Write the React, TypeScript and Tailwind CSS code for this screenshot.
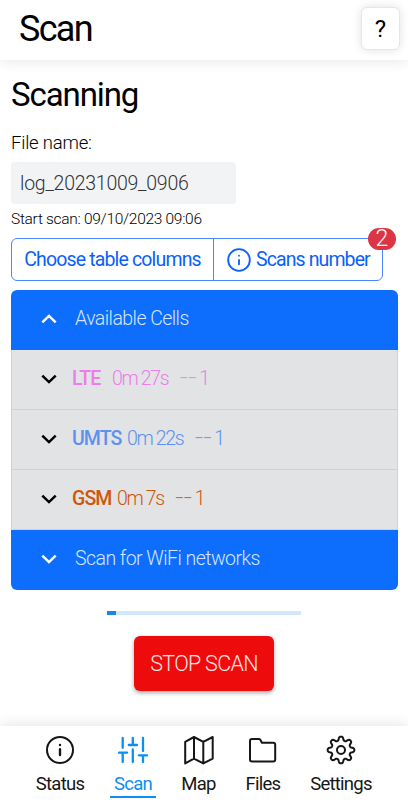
import type { ReactNode } from "react";
import clsx from "clsx";
import { Info } from "lucide-react";

function NavIcon({ children, thick }: { children: ReactNode; thick?: boolean }) {
  return (
    <svg
      viewBox="0 0 30 30"
      className="w-[30px] h-[30px]"
      fill="none"
      stroke="currentColor"
      strokeWidth={thick ? 2.3 : 2}
      strokeLinecap="round"
      strokeLinejoin="round"
    >
      {children}
    </svg>
  );
}

// eight rounded teeth around the centre
const gearPoints = Array.from({ length: 160 }, (_, i) => {
  const a = (i / 160) * Math.PI * 2;
  const wave = Math.cos(8 * a);
  const r = 11.5 + 2 * Math.tanh(1.6 * wave);
  return `${(15 + r * Math.cos(a)).toFixed(2)},${(15 + r * Math.sin(a)).toFixed(2)}`;
}).join(" ");

function Chevron({ up, className }: { up?: boolean; className?: string }) {
  return (
    <svg
      viewBox="0 0 16 10"
      className={clsx("w-4 h-2.5 shrink-0", className)}
      fill="none"
      stroke="currentColor"
      strokeWidth="2.5"
    >
      <path d={up ? "M1.3 8.3 8 1.9l6.7 6.4" : "M1.3 1.7 8 8.1l6.7-6.4"} />
    </svg>
  );
}

const cells = [
  { name: "LTE", time: "0m 27s", count: "1", color: "text-[#ee7cea]", nameWidth: "w-10" },
  { name: "UMTS", time: "0m 22s", count: "1", color: "text-[#5c92ee]", nameWidth: "w-[55px]" },
  { name: "GSM", time: "0m 7s", count: "1", color: "text-[#d0560c]", nameWidth: "w-[45px]" },
];

function SectionRow({ title, open }: { title: string; open?: boolean }) {
  return (
    <div className="h-[60px] pl-[30px] pb-0.5 flex items-center bg-[#0d6efd] text-white">
      <Chevron up={open} />
      <p className="ml-[18px] text-[19.5px] font-light tracking-[-0.55px] text-[#d5e5ff]">
        {title}
      </p>
    </div>
  );
}

type NavItemProps = {
  label: string;
  icon: ReactNode;
  width: string;
  active?: boolean;
};

function NavItem({ label, icon, width, active }: NavItemProps) {
  return (
    <button
      className={clsx(
        "h-[72px] pt-2 flex flex-col items-center border-b-2",
        width,
        active ? "text-[#0d8ff0] border-[#0d8ff0]" : "text-[#161616] border-transparent"
      )}
    >
      <span className="h-8 flex items-center justify-center">{icon}</span>
      <span className="mt-1.5 text-[18.5px] leading-6 tracking-[-0.75px] whitespace-nowrap">
        {label}
      </span>
    </button>
  );
}

export default function App() {
  return (
    <div className="w-[408px] h-[800px] bg-white text-black flex flex-col overflow-hidden font-['Roboto',sans-serif]">
      <header className="h-[60px] shrink-0 pl-[19px] pr-2 flex items-center justify-between shadow-[0_2px_12px_rgba(0,0,0,0.09)]">
        <h1 className="text-[36px] leading-[58px] mb-0.5 tracking-[-1.7px]">Scan</h1>
        <button className="w-[39px] h-[43px] mb-[3px] rounded-md border border-[#e6e6e6] bg-white text-[24px] leading-none shadow-[0_0_10px_rgba(0,0,0,0.12)]">
          ?
        </button>
      </header>

      <main className="flex-1 pl-[11px] pr-[10px]">
        <h2 className="mt-[13px] text-[33px] leading-[44px] tracking-[-1.1px]">Scanning</h2>
        <p className="mt-[14px] text-[18.5px] leading-6 font-light tracking-[-0.2px]">File name:</p>
        <div className="mt-[7px] w-[225px] h-[42px] rounded bg-[#f1f3f5] pl-[9px] text-[19.5px] leading-[43px] font-light tracking-[-0.25px] text-[#333]">
          log_20231009_0906
        </div>
        <p className="mt-[5px] text-[15.5px] leading-5 font-light tracking-[-0.3px]">
          Start scan: 09/10/2023 09:06
        </p>

        <div className="relative mt-[9px] w-[372px] h-[43px] flex rounded-md border border-[#4a86ff] text-[#0b5ffb] text-[19.5px] whitespace-nowrap">
          <button className="w-[202px] border-r border-[#4a86ff] tracking-[-0.85px]">
            Choose table columns
          </button>
          <button className="flex-1 flex items-center pl-3 tracking-[-0.9px]">
            <Info size={26} strokeWidth={1.7} className="mr-[4px]" />
            Scans number
          </button>
          <span className="absolute -top-[11px] -right-[14px] w-7 h-[22px] rounded-full bg-[#dc3545] text-white text-[23px] leading-[22px] font-light text-center">
            2
          </span>
        </div>

        <div className="mt-[9px] h-[300px] rounded-md overflow-hidden">
          <SectionRow title="Available Cells" open />
          {cells.map((cell) => (
            <div
              key={cell.name}
              className="h-[60px] pl-[30px] pb-0.5 flex items-center bg-[#e2e3e5] border-x border-b border-[#cfd1d4] text-[19.5px] font-light"
            >
              <Chevron className="-ml-px -mb-px text-black" />
              <div className={clsx("ml-[15px] flex items-center whitespace-pre tracking-[-1.35px]", cell.color)}>
                <span className={clsx("font-medium tracking-[-0.9px]", cell.nameWidth)}>{cell.name}</span>
                <span>{cell.time}</span>
                <span className="ml-[11px] text-[17px] tracking-[-1.2px]">−−</span>
                <span className="ml-[3px]">{cell.count}</span>
              </div>
            </div>
          ))}
          <SectionRow title="Scan for WiFi networks" />
        </div>

        <div className="mt-[21px] ml-24 w-[194px] h-1 bg-[#d0e7fc]">
          <div className="w-[9px] h-1 bg-[#1a86ea]" />
        </div>
        <button className="mt-[21px] ml-[123px] w-[140px] h-[55px] pt-px rounded-md bg-[#ee0b0b] text-[#ffe4e2] text-[21.5px] font-light tracking-[-0.7px] shadow-[0_2px_4px_rgba(0,0,0,0.35)]">
          STOP SCAN
        </button>
      </main>

      <nav className="h-[74px] shrink-0 pl-[30px] flex gap-5 shadow-[0_-2px_12px_rgba(0,0,0,0.1)]">
        <NavItem
          label="Status"
          width="w-[60px]"
          icon={
            <NavIcon>
              <circle cx="15" cy="15" r="13" />
              <path d="M15 10v.1M15 14.2v5.8" strokeWidth="2.4" />
            </NavIcon>
          }
        />
        <NavItem
          label="Scan"
          width="w-[46px]"
          active
          icon={
            <NavIcon thick>
              <path d="M4.7 3v9.8M.9 17.7h8.2M4.7 17.7V27M14.8 3v7M10.8 10h8.2M14.8 14.5V27M25 3v13M20.9 20.3h8.2M25 20.3V27" />
            </NavIcon>
          }
        />
        <NavItem
          label="Map"
          width="w-[45px]"
          icon={
            <NavIcon>
              <path d="M1.2 6.8 10 2l9.3 4.8 9.4-4.8v21.6l-9.4 4.8L10 23.6l-8.8 4.8zM10 2v21.6M19.3 6.8v21.6" />
            </NavIcon>
          }
        />
        <NavItem
          label="Files"
          width="w-[44px]"
          icon={
            <NavIcon>
              <path d="M4 4h6.8a1.8 1.8 0 0 1 1.5.8l1.6 3h11.3a2 2 0 0 1 2 2v14.8a2 2 0 0 1-2 2H4a2 2 0 0 1-2-2V6a2 2 0 0 1 2-2z" />
            </NavIcon>
          }
        />
        <NavItem
          label="Settings"
          width="w-[72px]"
          icon={
            <NavIcon>
              <polygon points={gearPoints} />
              <circle cx="15" cy="15" r="4" />
            </NavIcon>
          }
        />
      </nav>
    </div>
  );
}
